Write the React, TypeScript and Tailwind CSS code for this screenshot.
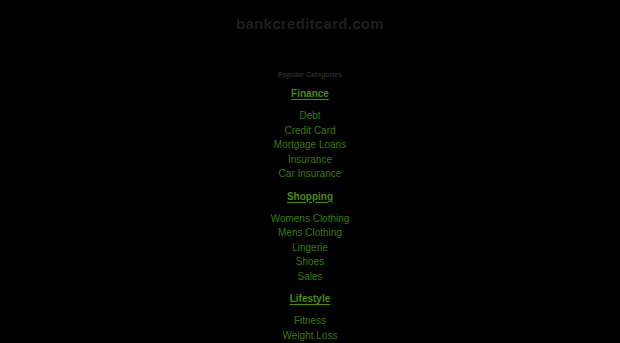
import React from "react";

interface Category {
  title: string;
  links: string[];
}

const categories: Category[] = [
  {
    title: "Finance",
    links: ["Debt", "Credit Card", "Mortgage Loans", "Insurance", "Car Insurance"],
  },
  {
    title: "Shopping",
    links: ["Womens Clothing", "Mens Clothing", "Lingerie", "Shoes", "Sales"],
  },
  {
    title: "Lifestyle",
    links: ["Fitness", "Weight Loss"],
  },
];

export default function App() {
  return (
    <main
      className="h-screen overflow-hidden w-full bg-black flex flex-col items-center"
      style={{ fontFamily: '"Liberation Sans", Arial, sans-serif' }}
    >
      <h1 className="mt-[14px] text-[15px] leading-[20px] font-bold text-[#1f1f1f] tracking-[0.3px]">
        bankcreditcard.com
      </h1>

      <div className="mt-[36px] flex flex-col items-center">
        <h2 className="text-[7px] leading-[10px] font-bold text-[#2c2c2c]">
          Popular Categories
        </h2>

        <div className="mt-[7px] flex flex-col items-center">
          {categories.map((cat) => (
            <div key={cat.title} className="flex flex-col items-center">
              <a
                href="#"
                className="block text-[10px] leading-[14px] font-bold text-[#4a8c0c] underline underline-offset-[2px]"
              >
                {cat.title}
              </a>
              <ul className="my-[8px] flex flex-col items-center">
                {cat.links.map((link) => (
                  <li key={link} className="leading-[14.5px]">
                    <a href="#" className="block text-[10px] leading-[14.5px] text-[#3b7a0a]">
                      {link}
                    </a>
                  </li>
                ))}
              </ul>
            </div>
          ))}
        </div>
      </div>
    </main>
  );
}
